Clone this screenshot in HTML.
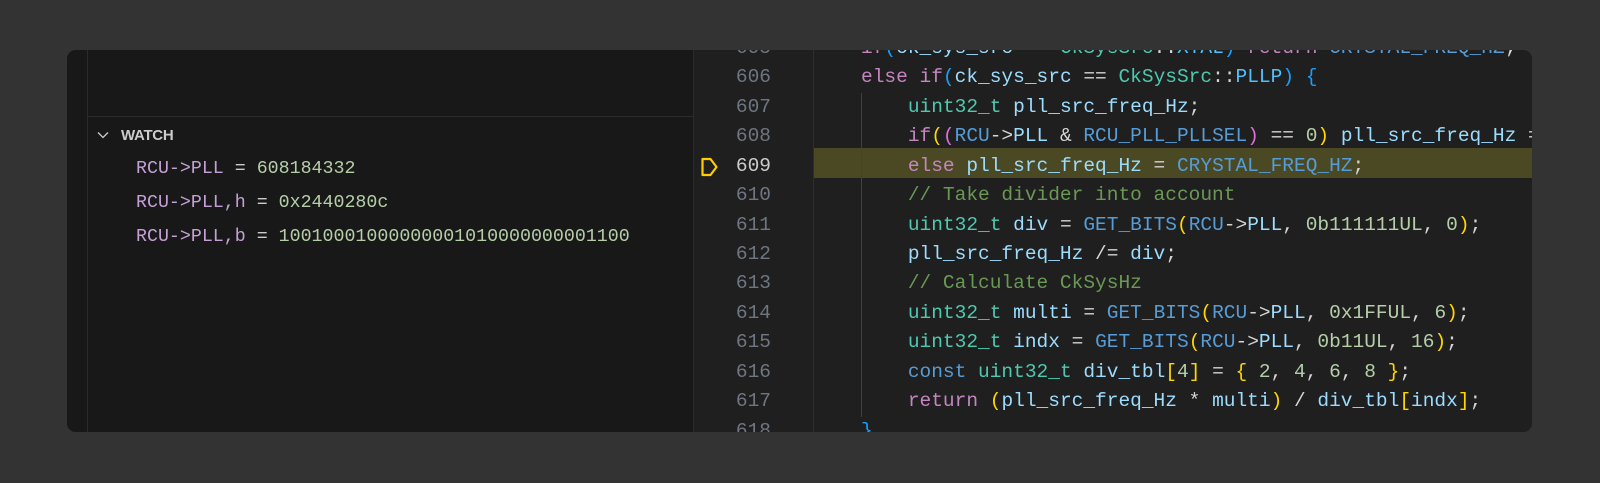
<!DOCTYPE html>
<html><head><meta charset="utf-8"><style>
html,body{margin:0;padding:0;background:#333333;width:1600px;height:483px;overflow:hidden}
#panel{position:absolute;left:67px;top:50px;width:1465px;height:382px;background:#181818;border-radius:9px;overflow:hidden}
.mono{font-family:"Liberation Mono",monospace}
#side{position:absolute;left:0;top:0;width:626px;height:382px;background:#181818;border-right:1px solid #2b2b2b}
#vline{position:absolute;left:20px;top:0;width:1px;height:382px;background:#2b2b2b}
#sep{position:absolute;left:21px;top:66px;width:605px;height:1px;background:#2b2b2b}
#watch{position:absolute;left:54px;top:77px;font:bold 15px "Liberation Sans",sans-serif;color:#cccccc;letter-spacing:-0.3px}
.w{position:absolute;left:69px;font-size:18.3px;line-height:20px;white-space:pre;color:#cccccc}
.wn{color:#c5a0d6}.wv{color:#b5cea8}
#ed{position:absolute;left:627px;top:0;width:838px;height:382px;background:#1f1f1f}
#gl{position:absolute;left:119px;top:0;width:1px;height:382px;background:#2e2e2e}
#ig{position:absolute;left:167px;top:43px;width:1px;height:324px;background:#404040}
#hl{position:absolute;left:120px;top:98px;width:720px;height:29.5px;background:#4a4924}
.ln{position:absolute;left:0;width:77px;text-align:right;color:#6e7681;font-size:19.5px;white-space:pre}
.cl{position:absolute;left:0;font-size:19.5px;white-space:pre;color:#d4d4d4}
.k{color:#c586c0}.t{color:#4ec9b0}.v{color:#9cdcfe}.m{color:#569cd6}.c{color:#4fc1ff}.n{color:#b5cea8}.cm{color:#6a9955}
.b1{color:#ffd700}.b2{color:#da70d6}.b3{color:#179fff}
</style></head><body>
<div id="panel">
 <div id="side">
  <div id="vline"></div><div id="sep"></div>
  <svg style="position:absolute;left:30px;top:80px" width="12" height="10" viewBox="0 0 12 10"><path d="M1 2.5 L6 7.5 L11 2.5" fill="none" stroke="#cccccc" stroke-width="1.3"/></svg>
  <div id="watch">WATCH</div>
  <div class="w mono" style="top:109px"><span class="wn">RCU-&gt;PLL</span> = <span class="wv">608184332</span></div>
  <div class="w mono" style="top:143px"><span class="wn">RCU-&gt;PLL,h</span> = <span class="wv">0x2440280c</span></div>
  <div class="w mono" style="top:177px"><span class="wn">RCU-&gt;PLL,b</span> = <span class="wv">10010001000000001010000000001100</span></div>
 </div>
 <div id="ed">
  <div id="hl"></div>
  <div id="gl"></div>
  <div id="ig"></div>
  <svg style="position:absolute;left:6px;top:107px" width="22" height="20" viewBox="0 0 22 20"><path d="M2.5 2 H10.5 L16.5 10 L10.5 18 H2.5 Z" fill="none" stroke="#ffcc00" stroke-width="2.2" stroke-linejoin="round"/></svg>
  <div class="mono" style="position:absolute;left:0;top:-16.2px;line-height:29.45px">
   <div class="ln" style="position:static;width:77px">605
606
607
608
<span style="color:#cccccc">609</span>
610
611
612
613
614
615
616
617
618</div>
  </div>
  <div class="mono" style="position:absolute;left:167px;top:-16.2px;line-height:29.45px;width:700px">
<div class="cl" style="position:static"><span class="k">if</span><span class="b3">(</span><span class="v">ck_sys_src</span> == <span class="t">CkSysSrc</span>::<span class="c">XTAL</span><span class="b3">)</span> <span class="k">return</span> <span class="m">CRYSTAL_FREQ_HZ</span>;
<span class="k">else if</span><span class="b3">(</span><span class="v">ck_sys_src</span> == <span class="t">CkSysSrc</span>::<span class="c">PLLP</span><span class="b3">)</span> <span class="b3">{</span>
    <span class="t">uint32_t</span> <span class="v">pll_src_freq_Hz</span>;
    <span class="k">if</span><span class="b1">(</span><span class="b2">(</span><span class="m">RCU</span>-&gt;<span class="v">PLL</span> &amp; <span class="m">RCU_PLL_PLLSEL</span><span class="b2">)</span> == <span class="n">0</span><span class="b1">)</span> <span class="v">pll_src_freq_Hz</span> = <span class="m">HSI_FREQ_HZ</span>;
    <span class="k">else</span> <span class="v">pll_src_freq_Hz</span> = <span class="m">CRYSTAL_FREQ_HZ</span>;
    <span class="cm">// Take divider into account</span>
    <span class="t">uint32_t</span> <span class="v">div</span> = <span class="m">GET_BITS</span><span class="b1">(</span><span class="m">RCU</span>-&gt;<span class="v">PLL</span>, <span class="n">0b111111UL</span>, <span class="n">0</span><span class="b1">)</span>;
    <span class="v">pll_src_freq_Hz</span> /= <span class="v">div</span>;
    <span class="cm">// Calculate CkSysHz</span>
    <span class="t">uint32_t</span> <span class="v">multi</span> = <span class="m">GET_BITS</span><span class="b1">(</span><span class="m">RCU</span>-&gt;<span class="v">PLL</span>, <span class="n">0x1FFUL</span>, <span class="n">6</span><span class="b1">)</span>;
    <span class="t">uint32_t</span> <span class="v">indx</span> = <span class="m">GET_BITS</span><span class="b1">(</span><span class="m">RCU</span>-&gt;<span class="v">PLL</span>, <span class="n">0b11UL</span>, <span class="n">16</span><span class="b1">)</span>;
    <span class="m">const</span> <span class="t">uint32_t</span> <span class="v">div_tbl</span><span class="b1">[</span><span class="n">4</span><span class="b1">]</span> = <span class="b1">{</span> <span class="n">2</span>, <span class="n">4</span>, <span class="n">6</span>, <span class="n">8</span> <span class="b1">}</span>;
    <span class="k">return</span> <span class="b1">(</span><span class="v">pll_src_freq_Hz</span> * <span class="v">multi</span><span class="b1">)</span> / <span class="v">div_tbl</span><span class="b1">[</span><span class="v">indx</span><span class="b1">]</span>;
<span class="b3">}</span></div>
  </div>
 </div>
</div>
</body></html>
